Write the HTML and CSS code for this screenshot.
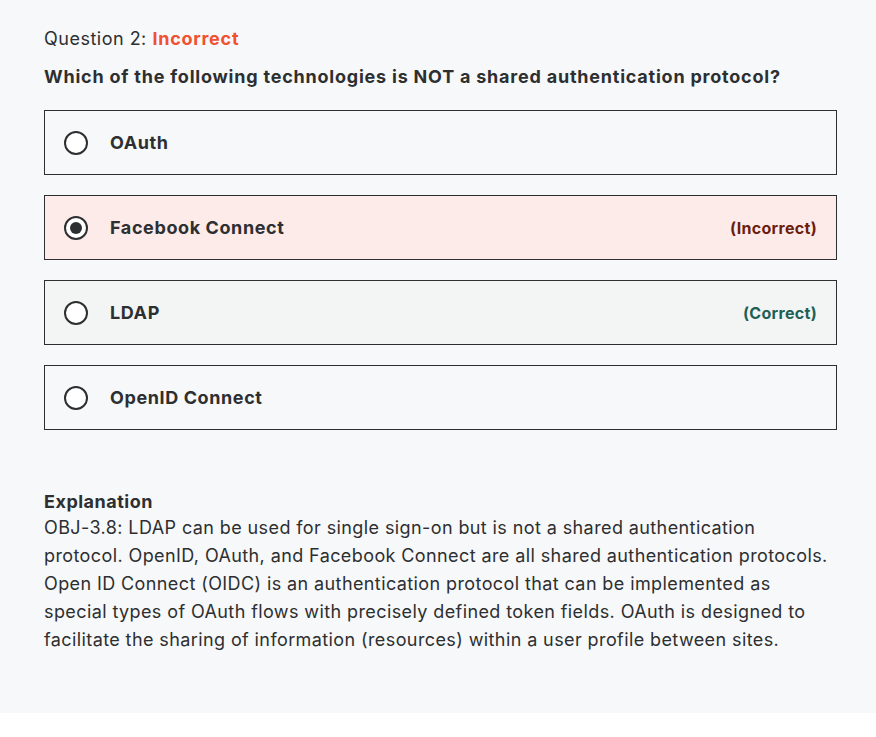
FILE: index.html
```html
<!DOCTYPE html>
<html lang="en">
<head>
<meta charset="utf-8">
<title>Question 2</title>
<link rel="stylesheet" href="styles.css">
</head>
<body>
<main class="page">
  <div class="status">Question 2: <span class="status-bad">Incorrect</span></div>
  <h2 class="prompt">Which of the following technologies is NOT a shared authentication protocol?</h2>
  <ul class="options">
    <li class="option">
      <span class="radio"></span>
      <span class="label">OAuth</span>
    </li>
    <li class="option option-incorrect">
      <span class="radio radio-checked"></span>
      <span class="label">Facebook Connect</span>
      <span class="verdict verdict-incorrect">(Incorrect)</span>
    </li>
    <li class="option option-correct">
      <span class="radio"></span>
      <span class="label">LDAP</span>
      <span class="verdict verdict-correct">(Correct)</span>
    </li>
    <li class="option">
      <span class="radio"></span>
      <span class="label">OpenID Connect</span>
    </li>
  </ul>
  <section class="explanation">
    <h3 class="explanation-title">Explanation</h3>
    <p class="explanation-text">OBJ-3.8: LDAP can be used for single sign-on but is not a shared authentication protocol. OpenID, OAuth, and Facebook Connect are all shared authentication protocols. Open ID Connect (OIDC) is an authentication protocol that can be implemented as special types of OAuth flows with precisely defined token fields. OAuth is designed to facilitate the sharing of information (resources) within a user profile between sites.</p>
  </section>
</main>
</body>
</html>
```
FILE: styles.css
```css
html, body {
  margin: 0;
  padding: 0;
  background: #ffffff;
}
body {
  font-family: Inter, "Noto Sans", sans-serif;
  color: #2d2f31;
}
.page {
  background: #f7f8fa;
  height: 713px;
  box-sizing: border-box;
  padding: 27px 39px 0 44px;
}
.status {
  font-size: 18px;
  line-height: 24px;
  letter-spacing: 0.5px;
}
.status-bad {
  color: #f0512f;
  font-weight: 700;
  letter-spacing: 0.75px;
}
.prompt {
  margin: 14px 0 0;
  font-size: 18px;
  line-height: 24px;
  font-weight: 700;
  letter-spacing: 0.78px;
}
.options {
  list-style: none;
  margin: 21px 0 0;
  padding: 0;
  display: flex;
  flex-direction: column;
  gap: 20px;
}
.option {
  display: flex;
  align-items: center;
  height: 65px;
  box-sizing: border-box;
  border: 1px solid #2d2f31;
  padding: 0 19px 0 19px;
  background: #f7f8fa;
}
.option-incorrect { background: #fcebe9; }
.option-correct { background: #f2f5f4; }
.radio {
  width: 24px;
  height: 24px;
  box-sizing: border-box;
  border: 2px solid #2d2f31;
  border-radius: 50%;
  background: #fff;
  flex: none;
  display: flex;
  align-items: center;
  justify-content: center;
}
.radio-checked::after {
  content: "";
  width: 12px;
  height: 12px;
  border-radius: 50%;
  background: #2d2f31;
}
.label {
  margin-left: 22px;
  font-size: 18px;
  font-weight: 700;
  letter-spacing: 0.6px;
  flex: 1;
}
.verdict {
  font-size: 16px;
  font-weight: 700;
  letter-spacing: 0.3px;
}
.verdict-incorrect { color: #6b1d0e; }
.verdict-correct { color: #1e6055; }
.explanation {
  margin-top: 60px;
}
.explanation-title {
  margin: 0;
  font-size: 18px;
  line-height: 24px;
  font-weight: 700;
  letter-spacing: 0.5px;
}
.explanation-text {
  margin: 0;
  font-size: 18px;
  line-height: 28px;
  letter-spacing: 0.4px;
}
```
